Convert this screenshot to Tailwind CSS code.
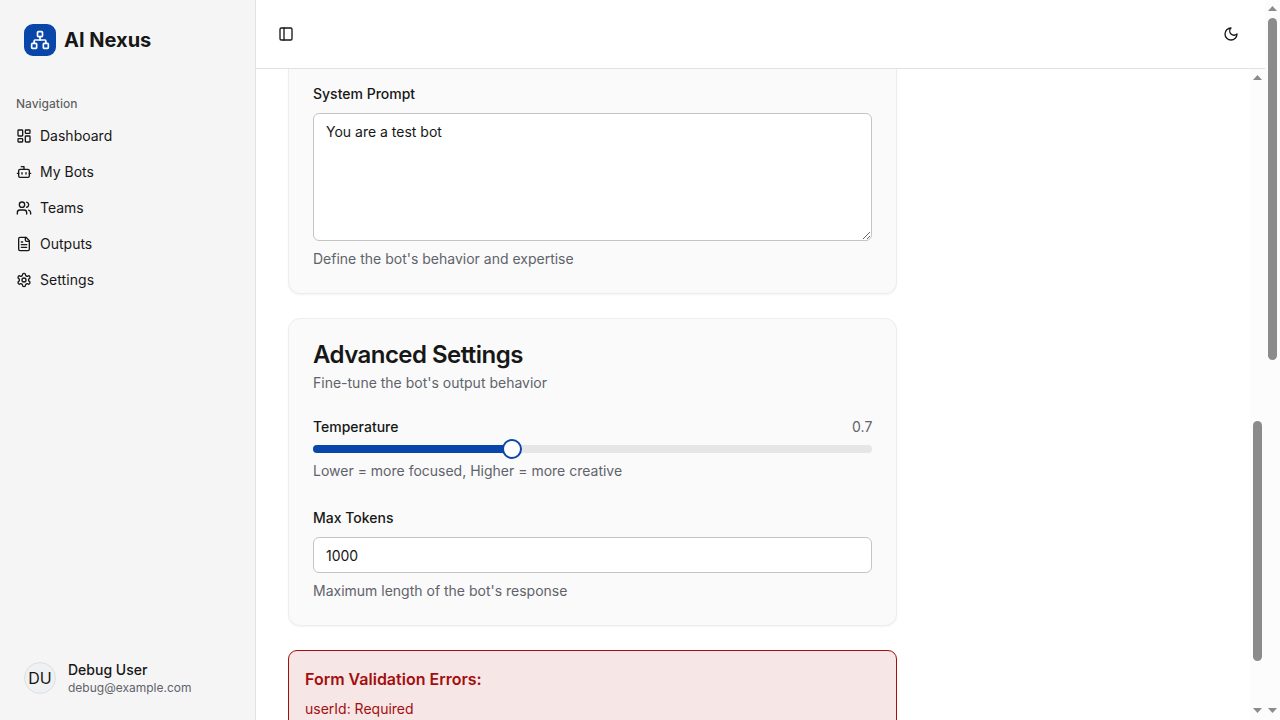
<!DOCTYPE html>
<html lang="en">
<head>
<meta charset="utf-8">
<title>AI Nexus</title>
<script src="https://cdn.jsdelivr.net/npm/@tailwindcss/browser@4"></script>
</head>
<body class="h-[720px] w-[1280px] overflow-hidden bg-white font-['Inter',sans-serif] text-[#171717]">
<div class="flex h-full">
  <aside class="flex w-64 shrink-0 flex-col border-r border-[#e2e2e2] bg-[#f5f5f5]">
    <div class="flex items-center gap-2 p-6">
      <div class="flex size-8 items-center justify-center rounded-[9px] bg-[#0847a9] text-white">
        <svg class="size-5" viewBox="0 0 24 24" fill="none" stroke="currentColor" stroke-width="2" stroke-linecap="round" stroke-linejoin="round"><rect x="16" y="16" width="6" height="6" rx="1"/><rect x="2" y="16" width="6" height="6" rx="1"/><rect x="9" y="2" width="6" height="6" rx="1"/><path d="M5 16v-3a1 1 0 0 1 1-1h12a1 1 0 0 1 1 1v3"/><path d="M12 12V8"/></svg>
      </div>
      <span class="text-xl font-bold">AI Nexus</span>
    </div>
    <nav class="flex flex-1 flex-col p-2">
      <div class="flex h-8 items-center px-2 text-xs font-medium text-[#171717]/70">Navigation</div>
      <ul class="flex flex-col gap-1 text-sm">
        <li class="flex h-8 items-center gap-2 px-2">
          <svg class="size-4" viewBox="0 0 24 24" fill="none" stroke="currentColor" stroke-width="2" stroke-linecap="round" stroke-linejoin="round"><rect width="7" height="9" x="3" y="3" rx="1"/><rect width="7" height="5" x="14" y="3" rx="1"/><rect width="7" height="9" x="14" y="12" rx="1"/><rect width="7" height="5" x="3" y="16" rx="1"/></svg>
          <span>Dashboard</span></li>
        <li class="flex h-8 items-center gap-2 px-2">
          <svg class="size-4" viewBox="0 0 24 24" fill="none" stroke="currentColor" stroke-width="2" stroke-linecap="round" stroke-linejoin="round"><path d="M12 8V4H8"/><rect width="16" height="12" x="4" y="8" rx="2"/><path d="M2 14h2"/><path d="M20 14h2"/><path d="M15 13v2"/><path d="M9 13v2"/></svg>
          <span>My Bots</span></li>
        <li class="flex h-8 items-center gap-2 px-2">
          <svg class="size-4" viewBox="0 0 24 24" fill="none" stroke="currentColor" stroke-width="2" stroke-linecap="round" stroke-linejoin="round"><path d="M16 21v-2a4 4 0 0 0-4-4H6a4 4 0 0 0-4 4v2"/><circle cx="9" cy="7" r="4"/><path d="M22 21v-2a4 4 0 0 0-3-3.87"/><path d="M16 3.13a4 4 0 0 1 0 7.75"/></svg>
          <span>Teams</span></li>
        <li class="flex h-8 items-center gap-2 px-2">
          <svg class="size-4" viewBox="0 0 24 24" fill="none" stroke="currentColor" stroke-width="2" stroke-linecap="round" stroke-linejoin="round"><path d="M15 2H6a2 2 0 0 0-2 2v16a2 2 0 0 0 2 2h12a2 2 0 0 0 2-2V7Z"/><path d="M14 2v4a2 2 0 0 0 2 2h4"/><path d="M10 9H8"/><path d="M16 13H8"/><path d="M16 17H8"/></svg>
          <span>Outputs</span></li>
        <li class="flex h-8 items-center gap-2 px-2">
          <svg class="size-4" viewBox="0 0 24 24" fill="none" stroke="currentColor" stroke-width="2" stroke-linecap="round" stroke-linejoin="round"><path d="M12.22 2h-.44a2 2 0 0 0-2 2v.18a2 2 0 0 1-1 1.73l-.43.25a2 2 0 0 1-2 0l-.15-.08a2 2 0 0 0-2.73.73l-.22.38a2 2 0 0 0 .73 2.73l.15.1a2 2 0 0 1 1 1.72v.51a2 2 0 0 1-1 1.74l-.15.09a2 2 0 0 0-.73 2.73l.22.38a2 2 0 0 0 2.73.73l.15-.08a2 2 0 0 1 2 0l.43.25a2 2 0 0 1 1 1.73V20a2 2 0 0 0 2 2h.44a2 2 0 0 0 2-2v-.18a2 2 0 0 1 1-1.73l.43-.25a2 2 0 0 1 2 0l.15.08a2 2 0 0 0 2.73-.73l.22-.39a2 2 0 0 0-.73-2.73l-.15-.08a2 2 0 0 1-1-1.74v-.5a2 2 0 0 1 1-1.74l.15-.09a2 2 0 0 0 .73-2.73l-.22-.38a2 2 0 0 0-2.73-.73l-.15.08a2 2 0 0 1-2 0l-.43-.25a2 2 0 0 1-1-1.73V4a2 2 0 0 0-2-2z"/><circle cx="12" cy="12" r="3"/></svg>
          <span class="tracking-[0.005em]">Settings</span></li>
      </ul>
    </nav>
    <div class="flex items-center gap-3 p-6">
      <div class="flex size-8 items-center justify-center rounded-full border border-[#dcdfe2] bg-[#f0f1f3] text-base">DU</div>
      <div>
        <div class="text-sm font-medium">Debug User</div>
        <div class="text-xs text-[#5f636b]">debug@example.com</div>
      </div>
    </div>
  </aside>

  <div class="flex min-w-0 flex-1 flex-col">
    <header class="flex h-[69px] shrink-0 items-center justify-between border-b border-[#e2e2e2] pr-[26px] pl-[22px]">
      <svg class="size-4" viewBox="0 0 24 24" fill="none" stroke="currentColor" stroke-width="2" stroke-linecap="round" stroke-linejoin="round"><rect width="18" height="18" x="3" y="3" rx="2"/><path d="M9 3v18"/></svg>
      <svg class="size-4" viewBox="0 0 24 24" fill="none" stroke="currentColor" stroke-width="2" stroke-linecap="round" stroke-linejoin="round"><path d="M12 3a6 6 0 0 0 9 9 9 9 0 1 1-9-9Z"/></svg>
    </header>
    <div class="flex min-h-0 flex-1">
      <main class="flex flex-1 flex-col gap-6 overflow-hidden px-8">
        <section class="w-[609.33px] shrink-0 rounded-b-xl border border-t-0 border-[#ededed] bg-[#fafafa] px-6 pt-3 pb-6 shadow-xs">
          <div class="h-6"><label class="text-sm font-medium">System Prompt</label></div>
          <textarea class="mt-2 block h-32 w-full rounded-md border border-[#c4c4c4] bg-white px-3 py-2 text-sm">You are a test bot</textarea>
          <p class="mt-2 text-sm text-[#5f636b]">Define the bot's behavior and expertise</p>
        </section>

        <section class="w-[609.33px] shrink-0 rounded-xl border border-[#ededed] bg-[#fafafa] p-6 shadow-xs">
          <h2 class="text-2xl leading-none font-semibold tracking-[-0.0225em]">Advanced Settings</h2>
          <p class="mt-1.5 text-sm text-[#5f636b]">Fine-tune the bot's output behavior</p>
          <div class="mt-6 flex justify-between text-sm">
            <label class="font-medium">Temperature</label>
            <span class="text-[#5f636b]">0.7</span>
          </div>
          <div class="relative mt-2 h-2">
            <div class="h-2 overflow-hidden rounded-full bg-[#e6e6e6]"><div class="h-full bg-[#0847a9]" style="width:35%"></div></div>
            <div class="absolute -top-1.5 left-[189px] size-5 rounded-full border-2 border-[#0847a9] bg-white"></div>
          </div>
          <p class="mt-2 text-sm text-[#5f636b]">Lower = more focused, Higher = more creative</p>
          <div class="mt-6 h-6"><label class="text-sm font-medium">Max Tokens</label></div>
          <input class="mt-2 block h-9 w-full rounded-md border border-[#c4c4c4] bg-white px-3 py-1 text-sm" value="1000">
          <p class="mt-2 text-sm text-[#5f636b]">Maximum length of the bot's response</p>
        </section>

        <section class="h-40 w-[609.33px] shrink-0 rounded-[9px] border border-[#a30f0f] bg-[#f6e6e6] p-4 text-[#a30f0f]">
          <h3 class="font-semibold">Form Validation Errors:</h3>
          <p class="mt-2 text-sm">userId: Required</p>
        </section>
      </main>
      <div class="flex w-[15px] flex-col items-center bg-[#fcfcfc] pt-1.5 pb-[7px]">
        <svg class="h-[5px] w-[9px]" viewBox="0 0 9 5" fill="#8b8b8b"><path d="M0 5 4.5 0 9 5Z"/></svg>
        <div class="mt-[341px] h-60 w-[9px] rounded-full bg-[#8b8b8b]"></div>
        <svg class="mt-auto h-[5px] w-[9px]" viewBox="0 0 9 5" fill="#8b8b8b"><path d="M0 0 4.5 5 9 0Z"/></svg>
      </div>
    </div>
  </div>

  <div class="flex w-[15px] shrink-0 flex-col items-center bg-[#fcfcfc] pt-1.5 pb-[7px]">
    <svg class="h-[5px] w-[9px]" viewBox="0 0 9 5" fill="#8b8b8b"><path d="M0 5 4.5 0 9 5Z"/></svg>
    <div class="mt-[7px] h-[342px] w-[9px] rounded-full bg-[#8b8b8b]"></div>
    <svg class="mt-auto h-[5px] w-[9px]" viewBox="0 0 9 5" fill="#8b8b8b"><path d="M0 0 4.5 5 9 0Z"/></svg>
  </div>
</div>
</body>
</html>
